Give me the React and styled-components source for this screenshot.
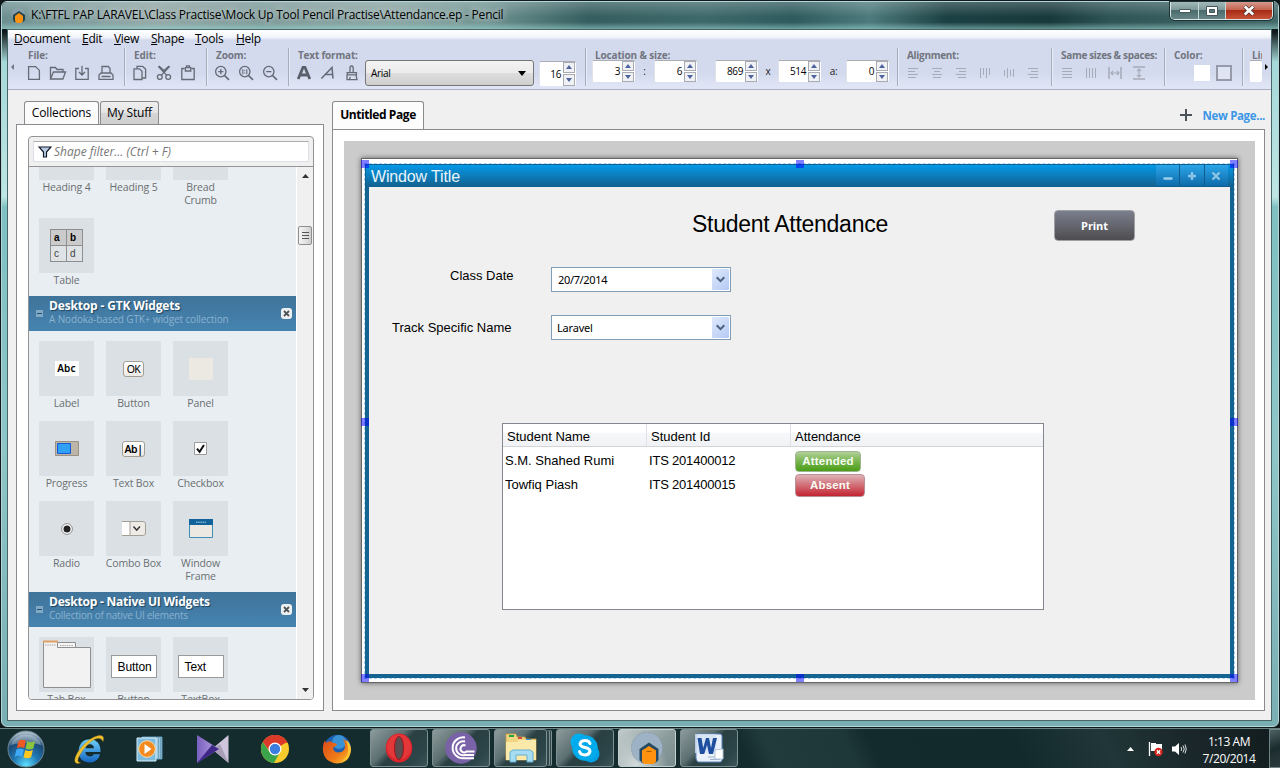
import React from 'react';
import styled, { createGlobalStyle, css } from 'styled-components';

const Global = createGlobalStyle`
  * { box-sizing: border-box; }
  html, body { margin: 0; padding: 0; overflow: hidden; }
  body { font-family: "Open Sans", "Noto Sans", sans-serif; font-size: 12px; letter-spacing: -0.3px; color: #000; background: #0d1b1d; }
  svg { display: block; flex: none; }
`;

/* ---------- desktop and window frame ---------- */
const Desktop = styled.div`width: 1280px; height: 768px; display: flex; flex-direction: column; overflow: hidden;`;
const Window = styled.div`
  height: 728px; padding: 1px 1px 1px 1px; background: #10191b; flex: none;
`;
const Glass = styled.div`
  height: 726px; border: 1px solid #b4d6d8; border-radius: 6px; padding: 0 6px 5px 5px; display: flex; flex-direction: column;
  background:
    linear-gradient(180deg, transparent 0 30px, #a5d8d8 60px, #bde6e4 195px, #7fc0c2 205px, #8ec6c8 450px, #79aeb2 100%);
`;
const TitleBar = styled.div`
  height: 27px; margin: 0 -6px 0 -5px; padding: 0 5px 0 8px; display: flex; align-items: flex-start; border-radius: 5px 5px 0 0;
  background:
    linear-gradient(180deg, rgba(255,255,255,.22), rgba(255,255,255,0) 55%, rgba(255,255,255,0) 75%, rgba(160,220,215,.55) 100%),
    linear-gradient(90deg, #6c8f90 0, #8fa5a4 12%, #7a9896 20%, #87a3a1 30%, #6f9391 38%, #355e60 46%, #3e696b 55%, #2f5b5e 62%, #4d7a7c 68%, #1c4144 74%, #18393c 82%, #2f5557 87%, #466b6c 100%);
`;
const AppIcon = styled.div`padding: 5px 4px 0 0;`;
const TitleText = styled.div`flex: 1; line-height: 25px; font-size: 12px; letter-spacing: -0.22px; color: #000; text-shadow: 0 0 6px rgba(255,255,255,.7), 0 0 10px rgba(255,255,255,.5); white-space: nowrap;`;
const Controls = styled.div`display: flex; height: 18px; border: 1px solid #dbe6e6; border-top: 0; border-radius: 0 0 5px 5px; overflow: hidden; box-shadow: 0 0 0 1px #1c3234;`;
const Control = styled.div`
  width: ${p => p.$w}px; display: flex; align-items: center; justify-content: center; border-right: 1px solid #c8d6d6;
  background: ${p => p.$close ? 'linear-gradient(#d59a8c, #c4604c 48%, #a62c14 50%, #c95236)' : 'linear-gradient(#a4b9b9, #7c9898 48%, #4a6c6d 50%, #668587)'};
  &:last-child { border-right: 0; }
`;
const Client = styled.div`flex: 1; border: 1px solid #47666a; background: #f0f0f0; display: flex; flex-direction: column; min-height: 0;`;

/* ---------- menu and toolbar ---------- */
const Chrome = styled.div`
  height: 60px; flex: none; border-bottom: 1px solid #aab0c6; display: flex; flex-direction: column;
  background: linear-gradient(180deg, #fff 0, #f3f5fb 7px, #dfe4f2 9px, #d3daed 10px, #d3daed 43px, #e0e5f6 57px);
`;
const Menu = styled.div`height: 18px; padding-left: 6px; display: grid; grid-template-columns: 68px 32px 37px 44px 41px 60px; line-height: 18px;`;
const MenuItem = styled.div`white-space: nowrap; &::first-letter { text-decoration: underline; }`;
const Toolbar = styled.div`height: 41px; display: flex;`;
const Scroll = styled.div`width: ${p => p.$w}px; display: flex; padding: 16px 0 0 ${p => p.$pl}px;`;
const Group = styled.div`
  width: ${p => p.$w}px; height: 38px; border-left: 1px solid ${p => p.$first ? 'transparent' : '#a6acbf'}; box-shadow: ${p => p.$first ? 'none' : 'inset 1px 0 #e8ecf7'};
  padding: 1px 0 0 3px; overflow: ${p => p.$clip ? 'hidden' : 'visible'}; flex: none;
`;
const GroupLabel = styled.div`height: 12px; line-height: 12px; padding-left: 6px; font-size: 10px; font-weight: 700; color: #71757f; letter-spacing: ${p => p.$ls || '-0.1px'}; white-space: nowrap;`;
const Tools = styled.div`display: flex; height: 24px; align-items: center;`;
const Cell = styled.div`width: 24px; height: 24px; display: flex; align-items: center; justify-content: center;`;
const FontSelect = styled.div`
  width: 169px; height: 26px; margin-left: 1px; border: 1px solid #767676; border-radius: 3px; padding: 0 7px 0 5px; display: flex; align-items: center; justify-content: space-between;
  font-size: 10px; letter-spacing: -0.3px; background: linear-gradient(#f3f3f3, #ebebeb 48%, #dddddd 52%, #cfcfcf);
`;
const Fields = styled.div`display: flex; height: 22px; margin-top: -1px; padding-left: 3px; font-size: 10px;`;
const Sep = styled.div`width: ${p => p.$w}px; text-align: center; line-height: 23px; color: #222;`;
const Spin = styled.div`width: ${p => p.$w || 43}px; height: ${p => p.$h || 22}px; display: flex; background: #fff; border-top: 1px solid #abadb3;  border-left: 1px solid #e2e3ea; border-radius: 2px;`;
const SpinValue = styled.div`flex: 1; text-align: right; padding-right: 2px; line-height: ${p => (p.$h || 22) - 1}px; font-size: 10px; letter-spacing: -0.4px;`;
const SpinButtons = styled.div`width: 12px; display: grid; grid-template-rows: 1fr 1fr; gap: 1px; margin-right: 1px;`;
const SpinButton = styled.div`border: 1px solid #a9abb3; background: #f0f1f4; display: flex; align-items: center; justify-content: center;`;
const Swatch = styled.div`width: 16px; height: 16px; background: ${p => p.$line ? '#dfe3f2' : '#fff'}; border: ${p => p.$line ? '2px solid #969bab' : '0'}; margin-right: 6px;`;

/* ---------- left panel ---------- */
const Body = styled.div`flex: 1; display: flex; padding: 11px 6px 9px 8px; gap: 8px; min-height: 0;`;
const Side = styled.div`width: 308px; display: flex; flex-direction: column;`;
const Tabs = styled.div`display: flex; gap: 1px; padding-left: 8px; height: 23px; flex: none;`;
const Tab = styled.div`
  width: ${p => p.$w}px; height: 23px; border: 1px solid #8b8b8b; border-bottom: 0; border-radius: 3px 3px 0 0; line-height: 21px; text-align: center; white-space: nowrap; font-size: 12px; letter-spacing: -0.15px;
  background: ${p => p.$on ? '#fbfbfb' : 'linear-gradient(#efefef, #e4e4e4 50%, #d6d6d6 52%, #cfcfcf)'};
`;
const Panel = styled.div`flex: 1; border: 1px solid #898b90; background: #fff; padding: 11px 9px 10px 11px; display: flex; min-height: 0;`;
const Collections = styled.div`flex: 1; border: 1px solid #949494; border-radius: 4px; background: #f0f0f0; overflow: hidden; display: flex; flex-direction: column;`;
const FilterBar = styled.div`height: 30px; border-bottom: 1px solid #949494; padding: 4px; flex: none;`;
const Filter = styled.div`height: 21px; background: #fff; border: 1px solid #dddfe6; border-top-color: #abadb3; display: flex; align-items: center; gap: 2px; padding-left: 4px; font-style: italic; color: #777; font-size: 12px; letter-spacing: 0;`;
const ListArea = styled.div`flex: 1; display: flex; min-height: 0;`;
const List = styled.div`width: 267px; background: #e8eef2; overflow: hidden;`;
const Shapes = styled.div`display: grid; grid-template-columns: repeat(3, 55px); column-gap: 12px; padding: 10px 10px 0; margin-bottom: -2px; ${p => p.$scrolled && css`margin-top: -52px;`}`;
const Shape = styled.div`display: flex; flex-direction: column; align-items: center; padding-bottom: 12px;`;
const Tile = styled.div`width: 55px; height: 55px; background: #dae0e4; display: flex; align-items: center; justify-content: center;`;
const ShapeName = styled.div`width: 63px; margin: 1px -4px -1px; text-align: center; line-height: 13px; font-size: 10.5px; letter-spacing: -0.15px; color: #6b6e71;`;
const Heading = styled.div`height: 35px; background: linear-gradient(#40739a, #4584b0); display: flex; align-items: center; padding: 0 4px 0 7px;`;
const HeadingText = styled.div`flex: 1; padding-left: 6px; margin-top: -3px;`;
const HeadingTitle = styled.div`color: #fff; font-weight: 700; font-size: 12px; line-height: 15px; letter-spacing: ${p => p.$ls}px; text-shadow: 1px 1px 1px #1d4561; white-space: nowrap;`;
const HeadingSub = styled.div`color: #8ab2cf; font-size: 10px; line-height: 13px; letter-spacing: ${p => p.$ls}px; white-space: nowrap;`;
const Close = styled.div`width: 11px; height: 11px; border-radius: 3px; background: #eef0f1; display: flex; align-items: center; justify-content: center;`;
const ScrollBar = styled.div`flex: 1; background: #f0f0f0; border-left: 1px solid #fff; display: flex; flex-direction: column; align-items: center; padding: 7px 0 7px;`;
const Thumb = styled.div`width: 14px; height: 19px; margin: 48px 0 auto; border: 1px solid #8f8f8f; border-radius: 2px; background: linear-gradient(90deg, #f4f4f4, #e4e4e4 50%, #cdcdcd); display: flex; align-items: center; justify-content: center;`;

const TableThumb = styled.div`display: grid; grid-template-columns: 16px 15px; grid-template-rows: 16px 15px; border: 1px solid #8c8e90; font: 10px/15px "Liberation Sans", sans-serif; letter-spacing: 0; color: #333;`;
const TableThumbCell = styled.div`padding-left: 3px; font-weight: ${p => p.$head ? 700 : 400}; color: ${p => p.$head ? '#000' : '#444'}; background: ${p => p.$head ? '#cbcbcb' : '#dfe3e6'}; border-right: ${p => p.$left ? 1 : 0}px solid #8c8e90; border-bottom: ${p => p.$head ? 1 : 0}px solid #8c8e90;`;
const MiniLabel = styled.div`width: 24px; height: 15px; background: #fff; font: 600 10px/15px "Noto Sans", sans-serif; letter-spacing: .2px; text-align: center;`;
const MiniButton = styled.div`width: ${p => p.$w}px; height: 16px; border: 1px solid #a39f95; border-radius: 3px; background: linear-gradient(#fff, #eceae6); font: ${p => p.$bold ? 600 : 400} 10.5px/14px "Noto Sans", sans-serif; letter-spacing: -0.5px; text-align: center;`;
const MiniPanel = styled.div`width: 24px; height: 22px; background: #ece9e2;`;
const NativeBox = styled.div`width: 46px; height: 23px; margin-top: 3px; border: 1px solid #9a9a9a; background: #fff; font: 12px/22px "Liberation Sans", sans-serif; letter-spacing: -0.1px; padding-left: 6px;`;

/* ---------- document area ---------- */
const Main = styled.div`flex: 1; display: flex; flex-direction: column;`;
const PageTabs = styled.div`height: 28px; display: flex; justify-content: space-between; flex: none;`;
const PageTab = styled.div`width: 92px; height: 28px; border: 1px solid #8b8b8b; border-bottom: 0; border-radius: 3px 3px 0 0; background: #fcfcfc; font-weight: 700; line-height: 25px; text-align: center; letter-spacing: -0.42px; white-space: nowrap;`;
const NewPage = styled.div`display: flex; align-items: center; gap: 11px; font-weight: 700; color: #3b97e6; font-size: 11.5px; letter-spacing: -0.35px; padding-right: 0;`;
const PagePanel = styled.div`flex: 1; border: 1px solid #898b90; background: #fff; padding: 11px 9px 10px 11px; display: flex;`;
const Canvas = styled.div`flex: 1; background: #cbcbcb; padding: 17px 0 0 17px;`;
const Page = styled.div`position: relative; width: 877px; height: 525px; background: #fff; border: 1px solid #666; box-shadow: 0 0 5px rgba(0,0,0,.55);`;
const Frame = styled.div`position: absolute; left: 3px; top: 5px; width: 869px; height: 514px; background: #156391; padding: 0 4px 4px; outline: 1px dashed #a9d3f5; font-family: "Liberation Sans", Arial, sans-serif; letter-spacing: 0;`;
const FrameTitle = styled.div`height: 23px; margin: 0 -4px; padding: 0 5px; border: 1px solid #12608f; border-bottom: 0; background: linear-gradient(#0499e8, #14608d); display: flex; justify-content: space-between; color: #e9f4fb; font-size: 16px; letter-spacing: -0.15px; line-height: 24px;`;
const FrameControls = styled.div`display: flex; width: 72px; gap: 1px; background: #0f5c8e;`;
const FrameControl = styled.div`flex: 1; height: 21px; background: linear-gradient(#2aa5e9, #0e6ba9); display: flex; align-items: center; justify-content: center;`;
const Surface = styled.div`position: relative; height: 487px; background: #f0f0f0;`;
const Placed = styled.div`position: absolute; left: ${p => p.$x}px; top: ${p => p.$y}px;`;
const Caption = styled(Placed)`font-size: ${p => p.$size || 13}px; line-height: ${p => (p.$size || 13) + 3}px; letter-spacing: ${p => p.$ls || 0}px; white-space: nowrap;`;
const Combo = styled(Placed)`width: 180px; height: 25px; border: 1px solid #7f9db9; background: #fff; display: flex; justify-content: space-between; align-items: center; padding: 1px 1px 1px ${p => p.$pl}px; font: 11px/22px "Noto Sans", sans-serif; letter-spacing: ${p => p.$ls}px;`;
const ComboButton = styled.div`width: 17px; height: 21px; border-radius: 1px; background: linear-gradient(135deg, #dfe9fd, #b4c9f3); display: flex; align-items: center; justify-content: center;`;
const Print = styled(Placed)`width: 81px; height: 31px; border: 1px solid #a0a0a4; border-radius: 4px; background: linear-gradient(#7b7e8c, #4e4d50); color: #fff; font: 700 11px/30px "Open Sans", sans-serif; text-align: center; letter-spacing: -0.1px;`;
const Table = styled(Placed)`width: 542px; height: 187px; border: 1px solid #828790; background: #fff; font-size: 13px;`;
const TableHead = styled.div`height: 23px; display: grid; grid-template-columns: 144px 144px 1fr; border-bottom: 1px solid #d5d5d5; background: linear-gradient(#fff 0 38%, #f5f7f9 42%, #f0f2f5); line-height: 26px;`;
const HeadCell = styled.div`height: 22px; padding-left: 4px; border-right: 1px solid #dfe3ea; letter-spacing: 0; &:last-child { border: 0; }`;
const TableRow = styled.div`height: 24px; display: grid; grid-template-columns: 144px 146px 1fr; padding-left: 2px; line-height: 27px; white-space: nowrap;`;
const TableCell = styled.span`letter-spacing: ${p => p.$ls || 0}px;`;
const Badge = styled.div`
  width: ${p => p.$w}px; height: ${p => p.$h}px; line-height: ${p => p.$h - 2}px; margin: ${p => p.$mt}px 0 0 0; border: 1px solid ${p => p.$red ? '#b98f94' : '#9fb493'}; border-radius: 4px; color: #f8fdf4; font-size: 11.5px; font-weight: 700; text-align: center; letter-spacing: .2px;
  background: ${p => p.$red ? 'linear-gradient(#dfb3b7, #d2737b 45%, #c32431)' : 'linear-gradient(#b0d098, #7cb855 45%, #4a9d15)'};
`;
const Handle = styled.div`position: absolute; width: 8px; height: 8px; left: ${p => p.$x}px; top: ${p => p.$y}px; background: rgba(0,0,255,.5);`;

/* ---------- taskbar ---------- */
const Taskbar = styled.div`
  height: 40px; flex: none; border-top: 1px solid #6b8283; display: flex; align-items: flex-start; padding-left: 7px;
  background: linear-gradient(65deg, #152c2e 0 58%, #213b3d 60%, #1e3739 66%, #142b2d 68%, #132a2c 79%, #203638 86%, #1a2629 93%, #121c1f 100%);
`;
const Launcher = styled.div`width: ${p => p.$w}px; height: 39px; display: flex; align-items: center; justify-content: flex-start;`;
const TaskButton = styled.div`
  width: 58px; height: 38px; margin-right: 4px; border: 1px solid ${p => p.$on ? '#c5cfcf' : '#7e9092'}; border-radius: 3px; display: flex; align-items: center; justify-content: center;
  background: ${p => p.$on
    ? 'radial-gradient(circle at 30% 100%, #d5dcdc, rgba(190,200,200,.3) 60%), linear-gradient(135deg, #c3cccc, #75888a 60%, #5d7375)'
    : 'linear-gradient(135deg, #8d9b9c 0, #5c6f71 38%, #2a4043 50%, #2c4548 80%, #3d5558)'};
`;
const Stacked = styled(TaskButton)`width: 53px; margin-right: 9px; box-shadow: 3px 0 0 -1px #30474a, 4px 0 0 -1px #7e9092, 5px 0 0 -1px #30474a, 6px 0 0 -1px #7e9092;`;
const Tray = styled.div`margin-left: auto; display: flex; align-items: center; height: 39px; color: #fff;`;
const Clock = styled.div`width: 80px; text-align: center; font-size: 12px; line-height: 17px; letter-spacing: -0.45px; padding-top: 2px;`;
const ShowDesktop = styled.div`width: 11px; height: 39px; border: 1px solid #718587; border-right: 0; background: linear-gradient(160deg, #4d6062, #1b2c2f 50%, #2c3b3e);`;

/* ---------- small drawings ---------- */
const Icon = ({ w = 16, h = 16, c = '#656b76', sw = 1.3, children }) => (
  <svg width={w} height={h} viewBox={`0 0 ${w} ${h}`} fill="none" stroke={c} strokeWidth={sw}>{children}</svg>
);
const Tri = ({ w, h, d, c = '#000' }) => <svg width={w} height={h} viewBox={`0 0 ${w} ${h}`}><path d={d} fill={c} /></svg>;

const NewIcon = () => <Icon><path d="M2.6 1.6h7l3.8 3.8v9H2.6z" /></Icon>;
const OpenIcon = () => <Icon w={18}><path d="M1.5 14V2.5h5l1.5 2h6V7M1.5 14l3-7h12l-2.6 7z" /></Icon>;
const SaveIcon = () => <Icon><path d="M5 3.5H1.8v10.8h12.4V3.5H11M8 .8v9M5 7l3 3 3-3" /></Icon>;
const PrintIcon = () => <Icon><path d="M4 8V1.5h6.3L12 3.3V8M1 14.4V10l2-2h10l2 2v4.4zM3.5 11.5h9" /></Icon>;
const CopyIcon = () => <Icon><path d="M2 3.8h5.5L10 6.3v8.2H2zM5 3.5V1.4h5.6L13.6 4v9H10" /></Icon>;
const CutIcon = () => <Icon><path d="M2.2 1.4l8.6 9M13.8 1.4l-8.6 9M3 1l6.5 6M13 1L6.5 7" /><circle cx="3.8" cy="12" r="2.4" /><circle cx="12.2" cy="12" r="2.4" /></Icon>;
const PasteIcon = () => <Icon><path d="M4.6 3.500H1.800v11h12.400v-11h-2.800" /><path d="M5.400 2.600h5.400v3.400H5.400z" /><path d="M6.500 2.400V.8h3v1.600" /></Icon>;
const ZoomIcon = ({ kind }) => (
  <Icon><circle cx="6.8" cy="6.6" r="5.2" /><path d="M10.6 10.6l4.4 4.2" strokeWidth="1.6" />
    {kind === 'in' && <path d="M6.8 4v5.2M4.2 6.6h5.2" />}
    {kind === 'out' && <path d="M4.2 6.6h5.2" />}
    {kind === 'one' && <path d="M4.8 4.2v5M8.8 4.2v5M6.8 5v1M6.8 7.4v1" strokeWidth="1.1" />}
  </Icon>
);
const BoldIcon = () => <Icon sw={2.8} c="#5b616b"><path d="M2.2 14L7 2.4h2L13.8 14M4 10h8" /></Icon>;
const ItalicIcon = () => <Icon sw={1.5}><path d="M1.4 13.6L12 2.4l1 11.2M5 9.6h8" /></Icon>;
const BrushIcon = () => <Icon><path d="M6 7V3q0-2 1.6-2t1.6 2v4M3.2 7.6h9.2v2.2H3.2zM3 10v4.6h10L12 10M5.6 14l.6-2" /></Icon>;
const Bars = ({ rows, vertical }) => (
  <Icon w={12} h={12} c="#a6abb8" sw={1}>
    {rows.map(([a, b], i) => vertical
      ? <path key={i} d={`M${1.5 + i * 3} ${a}V${b}`} />
      : <path key={i} d={`M${a} ${1.5 + i * 3}H${b}`} />)}
  </Icon>
);
const Gap = ({ turned }) => (
  <Icon w={14} h={14} c="#a6abb8" sw={1.5}><g transform={turned ? 'rotate(90 7 7)' : undefined}><path d="M1 1v12M13 1v12" /><path d="M3 7h8M5 5L3 7l2 2M9 5l2 2-2 2" strokeWidth="1.1" /></g></Icon>
);

function Spinner({ value, w, h }) {
  return (
    <Spin $w={w} $h={h}>
      <SpinValue $h={h}>{value}</SpinValue>
      <SpinButtons>
        <SpinButton><Tri w={6} h={4} d="M0 4L3 0l3 4z" c="#4f63a0" /></SpinButton>
        <SpinButton><Tri w={6} h={4} d="M0 0h6L3 4z" c="#4f63a0" /></SpinButton>
      </SpinButtons>
    </Spin>
  );
}

function ToolGroup({ label, w, ls, first, icons }) {
  return (
    <Group $w={w} $first={first}>
      <GroupLabel $ls={ls}>{label}</GroupLabel>
      <Tools>{icons.map((icon, i) => <Cell key={i}>{icon}</Cell>)}</Tools>
    </Group>
  );
}

function TopChrome() {
  return (
    <Chrome>
      <Menu>{['Document', 'Edit', 'View', 'Shape', 'Tools', 'Help'].map(m => <MenuItem key={m}>{m}</MenuItem>)}</Menu>
      <Toolbar>
        <Scroll $w={10} $pl={3}><Tri w={3} h={6} d="M3 0v6L0 3z" c="#70757f" /></Scroll>
        <ToolGroup label="File:" w={106} first icons={[<NewIcon />, <OpenIcon />, <SaveIcon />, <PrintIcon />]} />
        <ToolGroup label="Edit:" w={82} icons={[<CopyIcon />, <CutIcon />, <PasteIcon />]} />
        <ToolGroup label="Zoom:" w={82} icons={[<ZoomIcon kind="in" />, <ZoomIcon kind="one" />, <ZoomIcon kind="out" />]} />
        <Group $w={297}>
          <GroupLabel $ls="-0.2px">Text format:</GroupLabel>
          <Tools>
            <Cell><BoldIcon /></Cell><Cell><ItalicIcon /></Cell><Cell><BrushIcon /></Cell>
            <FontSelect>Arial<Tri w={8} h={5} d="M0 0h8L4 5z" /></FontSelect>
            <Sep $w={5} /><Spinner value="16" w={37} h={25} />
          </Tools>
        </Group>
        <Group $w={312}>
          <GroupLabel $ls="-0.15px">Location &amp; size:</GroupLabel>
          <Fields>
            <Spinner value="3" /><Sep $w={19}>:</Sep><Spinner value="6" /><Sep $w={18} />
            <Spinner value="869" /><Sep $w={20}>x</Sep><Spinner value="514" /><Sep $w={25}>a:</Sep><Spinner value="0" />
          </Fields>
        </Group>
        <ToolGroup label="Alignment:" w={154} ls="-0.3px" icons={[
          <Bars rows={[[1, 11], [1, 8], [1, 11], [1, 9]]} />, <Bars rows={[[1, 11], [3, 9], [1, 11], [2, 10]]} />, <Bars rows={[[1, 11], [4, 11], [1, 11], [3, 11]]} />,
          <Bars vertical rows={[[1, 11], [1, 8], [1, 11], [1, 8]]} />, <Bars vertical rows={[[3, 9], [1, 11], [3, 9], [2, 10]]} />, <Bars rows={[[1, 11], [4, 11], [1, 11], [3, 11]]} />,
        ]} />
        <ToolGroup label="Same sizes & spaces:" w={113} ls="-0.33px" icons={[
          <Bars rows={[[1, 11], [1, 11], [1, 11], [1, 11]]} />, <Bars vertical rows={[[1, 11], [1, 11], [1, 11], [1, 11]]} />, <Gap />, <Gap turned />,
        ]} />
        <Group $w={78}>
          <GroupLabel>Color:</GroupLabel>
          <Tools><Sep $w={26} /><Swatch /><Swatch $line /></Tools>
        </Group>
        <Group $w={20} $clip>
          <GroupLabel>Line:</GroupLabel>
          <Fields><Spin $w={60} /></Fields>
        </Group>
        <Scroll $w={9} $pl={3}><Tri w={3} h={6} d="M0 0l3 3-3 3z" /></Scroll>
      </Toolbar>
    </Chrome>
  );
}

function Section({ title, sub, ls, sls }) {
  return (
    <Heading>
      <svg width="7" height="7" viewBox="0 0 7 7"><path d="M0 0h7v7H0z" fill="#7fa9c5" /><path d="M1 3.5h5" stroke="#24506f" /></svg>
      <HeadingText><HeadingTitle $ls={ls}>{title}</HeadingTitle><HeadingSub $ls={sls}>{sub}</HeadingSub></HeadingText>
      <Close><svg width="7" height="7" viewBox="0 0 7 7"><path d="M1 1l5 5M6 1L1 6" stroke="#50555a" strokeWidth="1.8" /></svg></Close>
    </Heading>
  );
}
const Item = ({ name, children }) => <Shape><Tile>{children}</Tile><ShapeName>{name}</ShapeName></Shape>;

function SidePanel() {
  return (
    <Side>
      <Tabs><Tab $w={75} $on>Collections</Tab><Tab $w={59}>My Stuff</Tab></Tabs>
      <Panel>
        <Collections>
          <FilterBar>
            <Filter>
              <svg width="14" height="12" viewBox="0 0 14 12"><path d="M1 1h12L8.5 6v5h-3V6z" fill="#b9cbe4" stroke="#10182a" strokeWidth="1.2" /></svg>
              Shape filter... (Ctrl + F)
            </Filter>
          </FilterBar>
          <ListArea>
            <List>
              <Shapes $scrolled>
                <Item name="Heading 4" /><Item name="Heading 5" /><Item name="Bread Crumb" />
                <Item name="Table">
                  <TableThumb>
                    <TableThumbCell $head $left>a</TableThumbCell><TableThumbCell $head>b</TableThumbCell>
                    <TableThumbCell $left>c</TableThumbCell><TableThumbCell>d</TableThumbCell>
                  </TableThumb>
                </Item>
              </Shapes>
              <Section title="Desktop - GTK Widgets" sub="A Nodoka-based GTK+ widget collection" ls={-0.15} sls={-0.14} />
              <Shapes>
                <Item name="Label"><MiniLabel>Abc</MiniLabel></Item>
                <Item name="Button"><MiniButton $w={21}>OK</MiniButton></Item>
                <Item name="Panel"><MiniPanel /></Item>
                <Item name="Progress">
                  <svg width="24" height="15" viewBox="0 0 24 15"><path d="M.5.5h23v14H.5z" fill="#bdb5a8" stroke="#9b9184" /><path d="M2.5 2.5h13v10h-13z" fill="#2fa0f3" stroke="#1659d8" /></svg>
                </Item>
                <Item name="Text Box"><MiniButton $w={23} $bold>Ab|</MiniButton></Item>
                <Item name="Checkbox">
                  <svg width="13" height="13" viewBox="0 0 13 13"><path d="M.5.5h12v12H.5z" fill="#fff" stroke="#9c9c9c" /><path d="M3 6.6l2.6 3.2L10 3" fill="none" stroke="#111" strokeWidth="2" /></svg>
                </Item>
                <Item name="Radio">
                  <svg width="12" height="12" viewBox="0 0 12 12"><circle cx="6" cy="6" r="5.4" fill="#fff" stroke="#8d8d8d" /><circle cx="6" cy="6" r="3.5" fill="#222" /></svg>
                </Item>
                <Item name="Combo Box">
                  <svg width="24" height="15" viewBox="0 0 24 15"><path d="M0 .5h21q2.5 0 2.5 2.5v9q0 2.500-2.500 2.500H0z" fill="#fff" /><path d="M8 1h13q2 0 2 2v9q0 2-2 2H8z" fill="#eeebe6" /><path d="M0 .5h21q2.500 0 2.500 2.500v9q0 2.500-2.500 2.500H0M8 0v15" fill="none" stroke="#a39f95" /><path d="M11.500 5.500l3.200 3.700 3.200-3.700" fill="none" stroke="#333" strokeWidth="1.500" /></svg>
                </Item>
                <Item name="Window Frame">
                  <svg width="24" height="19" viewBox="0 0 24 19"><path d="M.5.5h23v18H.5z" fill="#ece9e2" stroke="#3f8db3" /><path d="M0 0h24v6H0z" fill="#11639a" /><path d="M7 3.200h10" stroke="#b7d8ea" strokeDasharray="1.500 .7" /></svg>
                </Item>
              </Shapes>
              <Section title="Desktop - Native UI Widgets" sub="Collection of native UI elements" ls={-0.22} sls={-0.27} />
              <Shapes>
                <Item name="Tab Box">
                  <svg width="49" height="49" viewBox="0 0 49 49"><path d="M15.500 2.500h18v6h-18z" fill="#f6f6f6" stroke="#8f8f8f" /><path d="M1.500 1.500h14v6h33v40h-47z" fill="#f2f2f2" stroke="#8f8f8f" /><path d="M1 1.500h15" stroke="#e0a066" strokeWidth="2" /><path d="M3 5h11M18 5.500h13" stroke="#aaa" strokeDasharray="1.500 .8" /></svg>
                </Item>
                <Item name="Button"><NativeBox>Button</NativeBox></Item>
                <Item name="TextBox"><NativeBox>Text</NativeBox></Item>
              </Shapes>
            </List>
            <ScrollBar>
              <Tri w={7} h={4} d="M0 4l3.500-4L7 4z" c="#333" />
              <Thumb><svg width="7" height="10" viewBox="0 0 7 10"><path d="M0 1.500h7M0 4.500h7M0 7.500h7" stroke="#555" /></svg></Thumb>
              <Tri w={7} h={4} d="M0 0h7L3.500 4z" c="#333" />
            </ScrollBar>
          </ListArea>
        </Collections>
      </Panel>
    </Side>
  );
}

const Chevron = () => <svg width="9" height="7" viewBox="0 0 9 7"><path d="M.7 1.200l3.800 3.900 3.800-3.900" fill="none" stroke="#4d6185" strokeWidth="2" /></svg>;
const handles = [[-1, 1], [434, 1], [868, 1], [-1, 259], [868, 259], [-1, 515], [434, 515], [868, 515]];

function Mockup() {
  return (
    <Page>
      <Frame>
        <FrameTitle>Window Title
          <FrameControls>
            <FrameControl><svg width="10" height="10" viewBox="0 0 10 10"><path d="M1.500 7.500h7" stroke="#9ccdec" strokeWidth="2.400" strokeLinecap="round" /></svg></FrameControl>
            <FrameControl><svg width="10" height="10" viewBox="0 0 10 10"><path d="M5 1v8M1 5h8" stroke="#8cc3e6" strokeWidth="2.400" /></svg></FrameControl>
            <FrameControl><svg width="10" height="10" viewBox="0 0 10 10"><path d="M1.500 1.500l7 7M8.500 1.500l-7 7" stroke="#8cc3e6" strokeWidth="2.400" /></svg></FrameControl>
          </FrameControls>
        </FrameTitle>
        <Surface>
          <Caption $x={323} $y={24} $size={23} $ls={-0.27}>Student Attendance</Caption>
          <Print $x={685} $y={23}>Print</Print>
          <Caption $x={81} $y={81}>Class Date</Caption>
          <Combo $x={182} $y={80} $pl={6} $ls={-0.35}>20/7/2014<ComboButton><Chevron /></ComboButton></Combo>
          <Caption $x={23} $y={133}>Track Specific Name</Caption>
          <Combo $x={182} $y={128} $pl={5} $ls={-0.2}>Laravel<ComboButton><Chevron /></ComboButton></Combo>
          <Table $x={133} $y={236}>
            <TableHead><HeadCell>Student Name</HeadCell><HeadCell>Student Id</HeadCell><HeadCell>Attendance</HeadCell></TableHead>
            <TableRow><TableCell>S.M. Shahed Rumi</TableCell><TableCell $ls={-0.2}>ITS 201400012</TableCell><Badge $w={66} $h={21} $mt={4}>Attended</Badge></TableRow>
            <TableRow><TableCell>Towfiq Piash</TableCell><TableCell $ls={-0.2}>ITS 201400015</TableCell><Badge $red $w={70} $h={23} $mt={3}>Absent</Badge></TableRow>
          </Table>
        </Surface>
      </Frame>
      {handles.map(([x, y], i) => <Handle key={i} $x={x} $y={y} />)}
    </Page>
  );
}

/* ---------- taskbar drawings ---------- */
const StartOrb = () => (
  <svg width="38" height="38" viewBox="0 0 38 38">
    <defs><radialGradient id="orb" cx=".5" cy=".95" r=".9"><stop offset="0" stopColor="#5fe0ff" /><stop offset=".4" stopColor="#1f78b4" /><stop offset=".75" stopColor="#1c4a74" /><stop offset="1" stopColor="#a9bcc8" /></radialGradient></defs>
    <circle cx="19" cy="19" r="18" fill="url(#orb)" stroke="#6d8794" />
    <path d="M4 15a15.500 14 0 0 1 30 0q-15-5-30 0z" fill="#fff" opacity=".3" />
    <path d="M11.500 11q3.500-2.500 7.500-.3l-1.700 7.400q-3.600-1.900-7.500.2z" fill="#ee5a24" />
    <path d="M20.200 11.300q3.600 1.900 8-.3l-1.900 7.500q-4 2-7.800.1z" fill="#8cc63f" />
    <path d="M9.400 19.600q3.800-2 7.500-.2l-1.800 7.300q-3.400-1.800-7.400.2z" fill="#3fa9f5" />
    <path d="M18.200 20q3.600 1.800 7.700-.1l-1.800 7.300q-4 2-7.600 0z" fill="#ffc81e" />
  </svg>
);
const IE = () => (
  <svg width="32" height="32" viewBox="0 0 32 32">
    <defs><linearGradient id="ie" x2="0" y2="1"><stop stopColor="#6fd0fb" /><stop offset="1" stopColor="#1565c0" /></linearGradient></defs>
    <path d="M27.500 19H12.300q.4 4.400 4.700 4.400 2.700 0 3.800-2.200h6.200Q25 29.500 16.800 29.500 5.800 29 5.500 18 6.500 6.500 17 6.200q10.800.8 10.500 12.800zM12.400 15.200h8.600q-.4-4-4.200-4t-4.400 4z" fill="url(#ie)" />
    <path d="M30 8.500q2-6.500-4-6Q19 3.500 11 11.500 2.500 20.500 1.800 27q0 5 5.700 2.800-3.700 0-2.200-4.800Q9 16 18 8.500q9-6.500 12 0z" fill="#f0c02c" stroke="#b88a16" strokeWidth=".4" />
  </svg>
);
const Player = () => (
  <svg width="28" height="26" viewBox="0 0 28 26"><path d="M6 1h20v22H6z" fill="#9cc8df" stroke="#5d94b2" /><path d="M22.500 2v20M24.500 2v20" stroke="#5d94b2" strokeWidth=".7" /><path d="M1 2h19v23H1z" fill="#7dbbdc" stroke="#d8eefa" /><circle cx="11" cy="13" r="8.300" fill="#f28a1f" stroke="#fbd9a5" /><path d="M8.500 8l7 5-7 5z" fill="#fff" /></svg>
);
const KM = () => (
  <svg width="32" height="28" viewBox="0 0 32 28"><defs><linearGradient id="km"><stop stopColor="#7a5fc0" /><stop offset="1" stopColor="#b7a6e2" /></linearGradient></defs><path d="M31.500 0v28L15 14z" fill="#cfc5dc" /><path d="M31.500 28L16 14l7-5z" fill="#8f849f" opacity=".6" /><path d="M0 0v28l22-14z" fill="url(#km)" /><path d="M0 28l22-14-7-4z" fill="#3f2888" /></svg>
);
const ChromeLogo = () => (
  <svg width="28" height="28" viewBox="0 0 28 28"><circle cx="14" cy="14" r="14" fill="#f8cc2d" /><path d="M14 14L1.880 7A14 14 0 0 1 26.100 7z" fill="#db3a2b" /><path d="M14 7.800h12.500A14 14 0 0 0 1.900 7l6.400 9z" fill="#db3a2b" /><path d="M1.900 7A14 14 0 0 0 13 28l6-11-5 2-5.500-2z" fill="#3ba34a" /><circle cx="14" cy="14" r="6.500" fill="#fff" /><circle cx="14" cy="14" r="5.200" fill="#3c7ee0" /></svg>
);
const Fox = () => (
  <svg width="30" height="30" viewBox="0 0 30 30"><defs><linearGradient id="fox" x2="1" y2="1"><stop stopColor="#d9481c" /><stop offset=".6" stopColor="#f07b17" /><stop offset="1" stopColor="#ffd23c" /></linearGradient></defs>
    <circle cx="15.500" cy="14" r="13.300" fill="#1f5fb0" /><circle cx="17" cy="8" r="7" fill="#45a8e3" opacity=".7" />
    <path d="M3 6q0 3 2 2.500Q8 6 11 9q3-.5 4 1.500-1 2-4 3 .500 5 5.500 5 4 0 6-3.500 1.500-5-1.500-10 7 3 7.800 11Q28 29 15 29.500 1.500 28 .8 15 .8 9.500 3 6z" fill="url(#fox)" /><path d="M24 6q5 3 5 10-1 9-9 12 6-6 6-12 0-5-2-10z" fill="#ffc531" /></svg>
);
const Opera = () => (
  <svg width="28" height="30" viewBox="0 0 28 30"><ellipse cx="14" cy="15" rx="13.300" ry="14.500" fill="#d9252b" /><ellipse cx="14" cy="14" rx="12" ry="12.500" fill="#ef4a4a" opacity=".5" /><ellipse cx="14" cy="15" rx="4.500" ry="11.500" fill="#5b4d50" stroke="#a31319" /></svg>
);
const Bit = () => (
  <svg width="32" height="32" viewBox="0 0 32 32"><circle cx="16" cy="16" r="15.700" fill="#7a62a8" /><g fill="none" stroke="#fff" strokeWidth="2"><path d="M20 5.500A10.500 10.500 0 1 0 19 26.300h10" /><path d="M20 9.500a7 7 0 1 0 0 13.500h9" /><path d="M20.500 13.500a3.600 3.600 0 1 0 1 6h8" /></g></svg>
);
const Folder = () => (
  <svg width="34" height="30" viewBox="0 0 34 30"><path d="M2 1h10l1 3h8l1 2h10v21H2z" fill="#f0d583" stroke="#c79f45" strokeWidth=".8" /><path d="M5 2h5v2H5z" fill="#28a046" /><path d="M14 4h4v2h-4z" fill="#d84a3a" /><path d="M22 6h5v2h-5z" fill="#3a8fe0" /><path d="M2 9h11l2-2h17v20H2z" fill="#fae9a8" /><path d="M6 29V19l3-2h17l3 2v10h-6v-7H12v7z" fill="#a8dcf2" stroke="#5eaed3" /></svg>
);
const SkypeLogo = () => (
  <svg width="30" height="30" viewBox="0 0 30 30"><circle cx="9" cy="9" r="8.500" fill="#00aff0" /><circle cx="21" cy="21" r="8.500" fill="#00a0e4" /><circle cx="15" cy="15" r="12.800" fill="#00aaeb" /><path d="M20 10.500q-1-3-5-3t-5 3.300q0 2.700 5 3.700t5 4q-1 3.500-5.300 3.500T9.500 18.500" fill="none" stroke="#fff" strokeWidth="3" strokeLinecap="round" /></svg>
);
const PencilLogo = ({ size = 32 }) => (
  <svg width={size} height={size} viewBox="0 0 32 32"><circle cx="16" cy="16" r="15.700" fill="#9db2c4" stroke="#7d8ea0" strokeDasharray="1 1.500" /><path d="M8.500 28V17L18 10.500l9.500 6.500v11l-3 3h-13z" fill="#244b63" /><path d="M11 30V18.500l7-4.500 7 4.500V30l-2.500 2h-9z" fill="#ff9310" /><path d="M15.500 19.500h5" stroke="#a85a00" /></svg>
);
const Word = () => (
  <svg width="30" height="30" viewBox="0 0 30 30"><path d="M4 1h22q2 0 2 2v24q0 2-2 2H4q-2-2-2-4V3q0-2 2-2z" fill="#eaf1fa" stroke="#5a84bd" /><path d="M1 1h21v19H1z" fill="#d3e2f5" opacity=".8" /><path d="M3.500 5h4l1.700 10L12 5h3l2 10 2-10h4l-4 16h-4l-2-9-2.800 9H6z" fill="#1f4f9f" /><path d="M14 24h12M16 26.500h10" stroke="#9fb3cd" /><path d="M21 17l8-1v10h-8z" fill="#fff" stroke="#b4c4d8" /></svg>
);

/* title bar mark: orange hexagon under a dark roof, on a faint dotted disc */
const TitleMark = () => (
  <svg width="17" height="17" viewBox="0 0 17 17"><circle cx="8" cy="7" r="6.800" fill="#8ea3b0" opacity=".6" /><path d="M3 12V8l6-4 6 4v5l-2 2H4z" fill="#24424e" /><path d="M5 14V9l4-3 4 3v5l-2 2H7z" fill="#ff9310" /></svg>
);

function TaskbarView() {
  return (
    <Taskbar>
      <Launcher $w={66}><StartOrb /></Launcher>
      <Launcher $w={63}><IE /></Launcher>
      <Launcher $w={61}><Player /></Launcher>
      <Launcher $w={64}><KM /></Launcher>
      <Launcher $w={61}><ChromeLogo /></Launcher>
      <Launcher $w={48}><Fox /></Launcher>
      <TaskButton><Opera /></TaskButton>
      <TaskButton><Bit /></TaskButton>
      <Stacked><Folder /></Stacked>
      <TaskButton><SkypeLogo /></TaskButton>
      <TaskButton $on><PencilLogo /></TaskButton>
      <TaskButton><Word /></TaskButton>
      <Tray>
        <Launcher $w={21}><Tri w={7} h={4} d="M0 4l3.500-4L7 4z" c="#fff" /></Launcher>
        <Launcher $w={23}><svg width="16" height="16" viewBox="0 0 16 16"><path d="M1.500 1v14" stroke="#fff" strokeWidth="1.300" /><path d="M3 2h5v1h6v7H3z" fill="#fff" /><circle cx="10.500" cy="11" r="4.200" fill="#d4261c" /><path d="M8.800 9.300l3.400 3.400M12.200 9.300l-3.400 3.400" stroke="#fff" strokeWidth="1.300" /></svg></Launcher>
        <Launcher $w={18}><svg width="16" height="14" viewBox="0 0 16 14"><path d="M1 4.500h3L8 1v12L4 9.500H1z" fill="#fff" /><path d="M10 5q1.500 2 0 4M12 3.500q2.500 3.500 0 7M14 2.500q2.500 4.500 0 9" fill="none" stroke="#d8e0e0" /></svg></Launcher>
        <Clock>1:13 AM<br />7/20/2014</Clock>
        <ShowDesktop />
      </Tray>
    </Taskbar>
  );
}

export default function App() {
  return (
    <Desktop>
      <Global />
      <Window>
        <Glass>
          <TitleBar>
            <AppIcon><TitleMark /></AppIcon>
            <TitleText>K:\FTFL PAP LARAVEL\Class Practise\Mock Up Tool Pencil Practise\Attendance.ep - Pencil</TitleText>
            <Controls>
              <Control $w={28}><svg width="12" height="6" viewBox="0 0 12 6"><path d="M.5 1.500h11v3H.5z" fill="#fff" stroke="#46585a" /></svg></Control>
              <Control $w={27}><svg width="12" height="10" viewBox="0 0 12 10"><path d="M.5.500h11v9H.5z" fill="#fff" stroke="#46585a" /><path d="M3.500 3.500h5v3h-5z" fill="#58787a" stroke="#46585a" /></svg></Control>
              <Control $w={46} $close><svg width="14" height="11" viewBox="0 0 14 11"><path d="M2.500 1.500l9 8M11.500 1.500l-9 8" stroke="#4e3a3a" strokeWidth="4.200" /><path d="M2.800 1.500l8.400 8M11.200 1.500l-8.400 8" stroke="#fff" strokeWidth="2.600" /></svg></Control>
            </Controls>
          </TitleBar>
          <Client>
            <TopChrome />
            <Body>
              <SidePanel />
              <Main>
                <PageTabs>
                  <PageTab>Untitled Page</PageTab>
                  <NewPage><svg width="12" height="12" viewBox="0 0 12 12"><path d="M6 0v12M0 6h12" stroke="#4c535b" strokeWidth="2" /></svg>New Page...</NewPage>
                </PageTabs>
                <PagePanel><Canvas><Mockup /></Canvas></PagePanel>
              </Main>
            </Body>
          </Client>
        </Glass>
      </Window>
      <TaskbarView />
    </Desktop>
  );
}
